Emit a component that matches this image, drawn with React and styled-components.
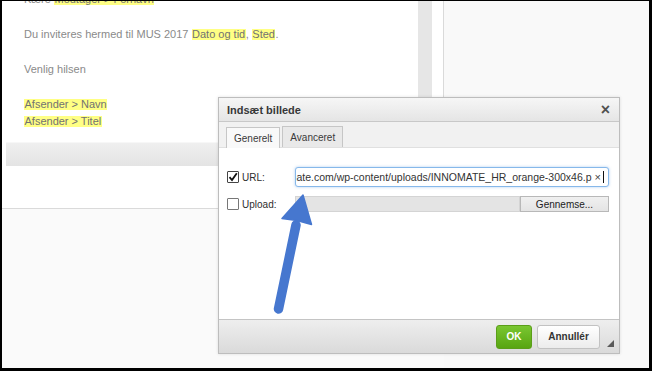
import React from "react";
import styled, { createGlobalStyle } from "styled-components";

const Global = createGlobalStyle`
  html, body { margin: 0; padding: 0; background: #fff; }
  body { font-family: "Liberation Sans", Arial, sans-serif; }
`;

const Frame = styled.div`
  position: relative;
  box-sizing: border-box;
  width: 652px;
  height: 371px;
  border-style: solid;
  border-color: #000;
  border-width: 1px 3px 3px 2px;
  background: #f9f9f9;
  display: grid;
  grid-template-columns: 442px 1fr;
  overflow: hidden;
`;

const LeftColumn = styled.div`
  display: flex;
  flex-direction: column;
`;

const EditorBox = styled.div`
  box-sizing: border-box;
  height: 208px;
  background: #fff;
  border-right: 1px solid #dadada;
  border-bottom: 1px solid #dadada;
  display: flex;
  flex-direction: column;
`;

const EditorTop = styled.div`
  height: 141px;
  display: flex;
`;

const Content = styled.div`
  flex: 1;
  overflow: hidden;
  padding-left: 22px;
  font-size: 11px;
  line-height: 17px;
  color: #8a8a8a;
`;

const Scrolled = styled.div`
  margin-top: -10.5px;
`;

const Para = styled.p`
  margin: 0 0 18px;
  white-space: nowrap;
`;

const Mark = styled.span`
  display: inline-block;
  line-height: 11px;
  background: #ffff84;
  color: #727272;
  padding: 0 0.5px;
`;

const Scrollbar = styled.div`
  width: 14px;
  background: #e6e6e6;
`;

const ScrollGap = styled.div`
  width: 11px;
`;

const StatusBar = styled.div`
  height: 24px;
  margin: 0 6px 0 4px;
  box-sizing: border-box;
  border-top: 1px solid #f7f7f7;
  background: linear-gradient(#efefef, #e4e4e4);
`;

const Below = styled.div`
  flex: 1;
  background: #fafafa;
`;

const RightColumn = styled.div`
  background: #f9f9f9;
`;

const Dialog = styled.div`
  position: absolute;
  left: 216px;
  top: 96px;
  width: 402px;
  height: 257px;
  box-sizing: border-box;
  border: 1px solid #bdbdbd;
  background: #fff;
  box-shadow: 0 0 3px rgba(0, 0, 0, 0.12);
  display: flex;
  flex-direction: column;
`;

const TitleBar = styled.div`
  box-sizing: border-box;
  height: 24px;
  border-bottom: 1px solid #c8c8c8;
  background: linear-gradient(#f6f6f6, #e5e5e5);
  display: flex;
  align-items: center;
  justify-content: space-between;
  padding: 0 9px 0 8px;
`;

const Title = styled.span`
  font-size: 11px;
  font-weight: bold;
  color: #383838;
`;

const Close = styled.span`
  font-size: 16px;
  font-weight: bold;
  color: #505050;
  line-height: 1;
`;

const TabRow = styled.div`
  box-sizing: border-box;
  height: 26px;
  background: #f1f1f1;
  border-bottom: 1px solid #e0e0e0;
  padding: 5px 0 0 7px;
  display: flex;
  align-items: flex-end;
  gap: 2px;
`;

const Tab = styled.div`
  box-sizing: border-box;
  height: 21px;
  padding: 0 7px;
  border: 1px solid #c6c6c6;
  border-bottom: none;
  display: flex;
  align-items: center;
  font-size: 10px;
  color: #3a3a3a;
  background: ${(p) => (p.$active ? "#f9f9f9" : "#e9e9e9")};
  margin-bottom: ${(p) => (p.$active ? "-1px" : "0")};
`;

const Body = styled.div`
  flex: 1;
  padding: 19px 10px 0 8px;
  display: flex;
  flex-direction: column;
  gap: 9px;
`;

const FieldRow = styled.div`
  display: grid;
  grid-template-columns: 68px 1fr;
  align-items: center;
  height: ${(p) => p.$h}px;
`;

const Label = styled.label`
  display: flex;
  align-items: center;
  gap: 3px;
  font-size: 10px;
  color: #2e2e2e;
`;

const Box = styled.span`
  box-sizing: border-box;
  width: 12px;
  height: 12px;
  border: 1px solid ${(p) => (p.$checked ? "#444" : "#777")};
  border-radius: 1px;
  background: #fff;
  display: flex;
  align-items: center;
  justify-content: center;
`;

const UrlInput = styled.div`
  box-sizing: border-box;
  height: 20px;
  border: 1px solid #86b8ea;
  border-radius: 3px;
  box-shadow: 0 0 3px rgba(110, 165, 230, 0.55);
  padding: 0 4px 0 0;
  display: flex;
  align-items: center;
  justify-content: flex-end;
  overflow: hidden;
  background: #fff;
`;

const UrlText = styled.span`
  flex-shrink: 0;
  white-space: nowrap;
  font-size: 10.5px;
  color: #333;
`;

const Clear = styled.span`
  flex-shrink: 0;
  font-size: 11px;
  color: #444;
  margin-left: 3px;
`;

const Caret = styled.span`
  flex-shrink: 0;
  width: 1px;
  height: 12px;
  background: #111;
  margin-left: 2px;
`;

const UploadField = styled.div`
  display: flex;
  height: 16px;
`;

const UploadTrack = styled.div`
  flex: 1;
  box-sizing: border-box;
  background: #e4e4e4;
  border: 1px solid #d4d4d4;
`;

const Browse = styled.div`
  box-sizing: border-box;
  width: 89px;
  border: 1px solid #b8b8b8;
  background: linear-gradient(#f0f0f0, #e4e4e4);
  font-size: 10px;
  color: #222;
  display: flex;
  align-items: center;
  justify-content: center;
`;

const Footer = styled.div`
  position: relative;
  box-sizing: border-box;
  height: 34px;
  border-top: 1px solid #c4c4c4;
  background: linear-gradient(#eeeeee, #dadada);
  display: flex;
  align-items: center;
  justify-content: flex-end;
  gap: 5px;
  padding: 0 19px 0 0;
`;

const Button = styled.div`
  box-sizing: border-box;
  height: 24px;
  width: ${(p) => p.$w}px;
  border-radius: 3px;
  display: flex;
  align-items: center;
  justify-content: center;
  font-size: 10px;
  font-weight: bold;
  border: 1px solid ${(p) => (p.$primary ? "#5b9e19" : "#c2c2c2")};
  color: ${(p) => (p.$primary ? "#fff" : "#333")};
  background: ${(p) =>
    p.$primary
      ? "linear-gradient(#79c631, #58a511)"
      : "linear-gradient(#ffffff, #ececec)"};
`;

const Grip = styled.div`
  position: absolute;
  right: 5px;
  bottom: 6px;
  width: 0;
  height: 0;
  border-left: 7px solid transparent;
  border-bottom: 7px solid #5a5a5a;
`;

const ArrowLayer = styled.svg`
  position: absolute;
  left: 0;
  top: 0;
  pointer-events: none;
`;

function Check() {
  return (
    <svg width="10" height="10" viewBox="0 0 10 10">
      <path d="M1.5 5.2 L4 8 L8.8 1.2" fill="none" stroke="#111" strokeWidth="1.8" />
    </svg>
  );
}

export default function App() {
  return (
    <>
      <Global />
      <Frame>
        <LeftColumn>
          <EditorBox>
            <EditorTop>
              <Content>
                <Scrolled>
                  <Para>
                    Kære <Mark>Modtager &gt; Fornavn</Mark>
                  </Para>
                  <Para>
                    Du inviteres hermed til MUS 2017 <Mark>Dato og tid</Mark>,{" "}
                    <Mark>Sted</Mark>.
                  </Para>
                  <Para>Venlig hilsen</Para>
                  <Para>
                    <Mark>Afsender &gt; Navn</Mark>
                    <br />
                    <Mark>Afsender &gt; Titel</Mark>
                  </Para>
                </Scrolled>
              </Content>
              <Scrollbar />
              <ScrollGap />
            </EditorTop>
            <StatusBar />
          </EditorBox>
          <Below />
        </LeftColumn>
        <RightColumn />

        <Dialog>
          <TitleBar>
            <Title>Indsæt billede</Title>
            <Close>×</Close>
          </TitleBar>
          <TabRow>
            <Tab $active>Generelt</Tab>
            <Tab>Avanceret</Tab>
          </TabRow>
          <Body>
            <FieldRow $h={20}>
              <Label>
                <Box $checked>
                  <Check />
                </Box>
                URL:
              </Label>
              <UrlInput>
                <UrlText>nate.com/wp-content/uploads/INNOMATE_HR_orange-300x46.p</UrlText>
                <Clear>×</Clear>
                <Caret />
              </UrlInput>
            </FieldRow>
            <FieldRow $h={16}>
              <Label>
                <Box />
                Upload:
              </Label>
              <UploadField>
                <UploadTrack />
                <Browse>Gennemse...</Browse>
              </UploadField>
            </FieldRow>
          </Body>
          <Footer>
            <Button $primary $w={36}>OK</Button>
            <Button $w={63}>Annullér</Button>
            <Grip />
          </Footer>
        </Dialog>

        <ArrowLayer width="647" height="367" viewBox="0 0 647 367">
          <line
            x1="276.5"
            y1="308"
            x2="294"
            y2="224"
            stroke="#4677cf"
            strokeWidth="9.5"
            strokeLinecap="round"
          />
          <polygon
            points="280,217.5 301,194 309.5,223.5 295,219.5"
            fill="#4677cf"
            stroke="#4677cf"
            strokeWidth="1.5"
            strokeLinejoin="round"
          />
        </ArrowLayer>
      </Frame>
    </>
  );
}
